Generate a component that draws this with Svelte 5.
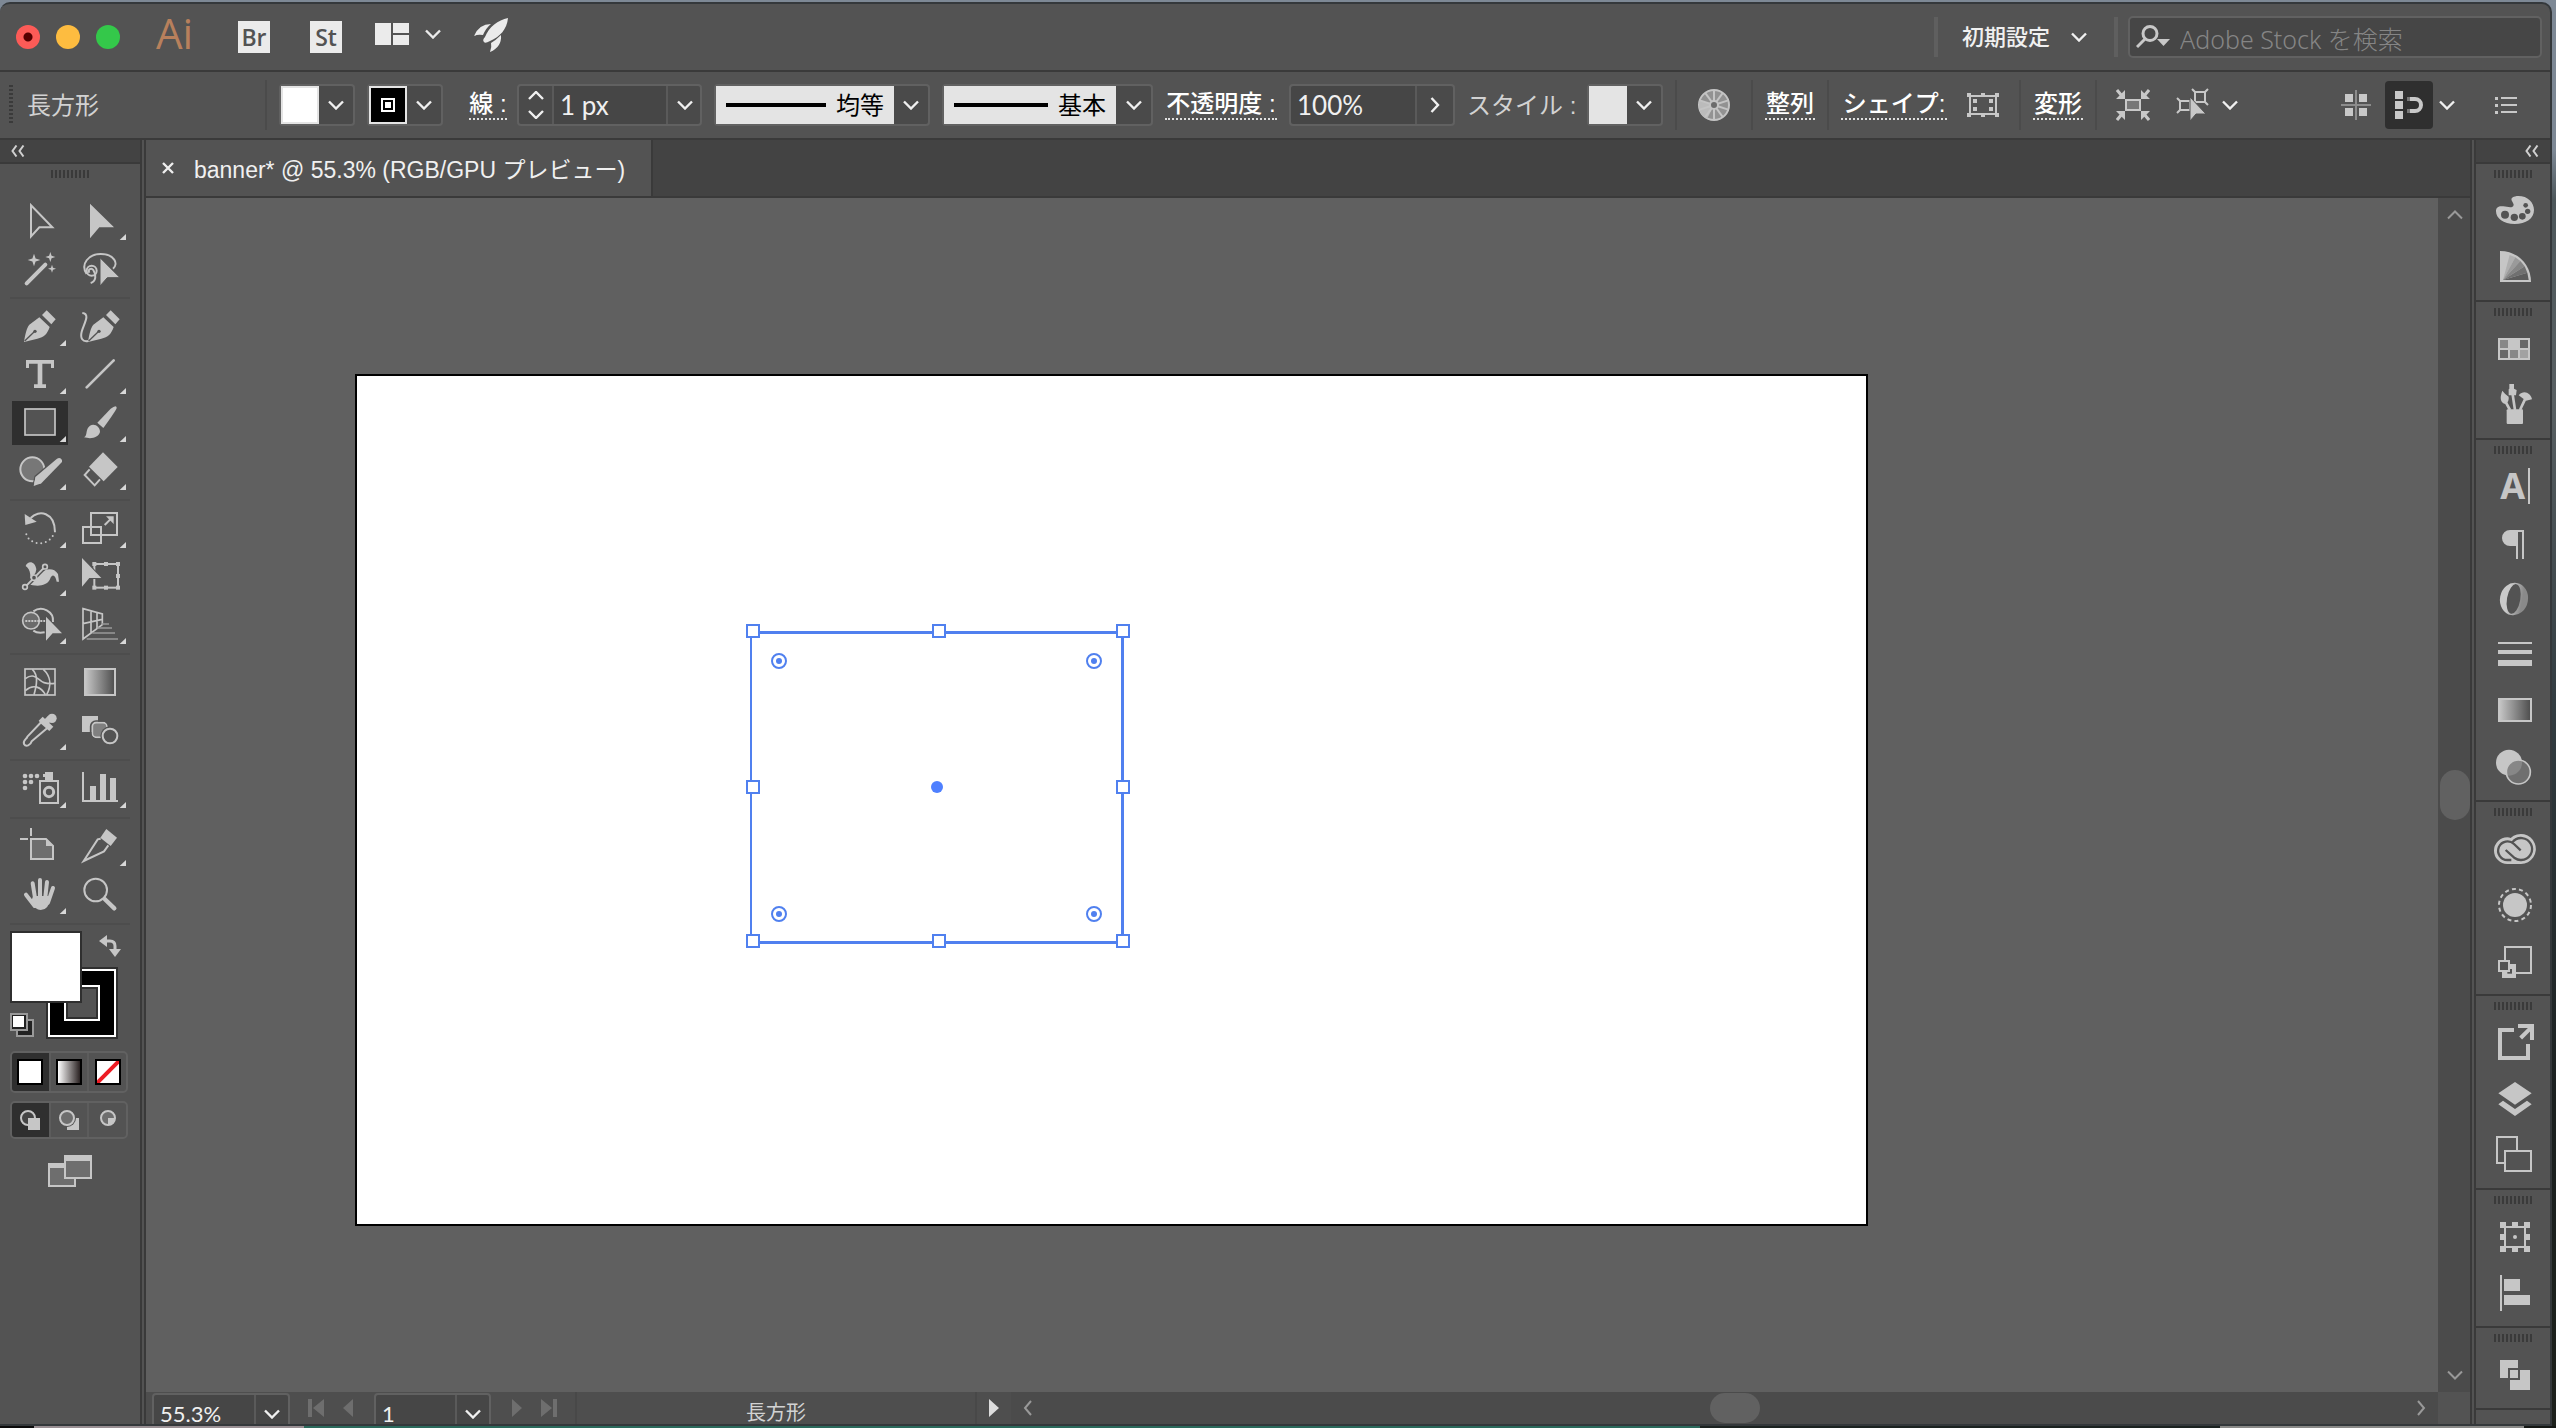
<script>
  const arrow = (x, y) => `<path d="M${x},${y}v104l28,-33h44z" fill="currentColor"/>`;
  const star = (x, y, r) => {
    const q = r / 4;
    return `<path d="M${x},${y - r}L${x + q},${y - q}L${x + r},${y}L${x + q},${y + q}L${x},${y + r}L${x - q},${y + q}L${x - r},${y}L${x - q},${y - q}z" fill="currentColor"/>`;
  };
  const squares = (points, s) =>
    points.map(([x, y]) => `<rect x="${x}" y="${y}" width="${s}" height="${s}" fill="currentColor"/>`).join('');
  const line = 'fill="none" stroke="currentColor" stroke-width="6"';
  const bg = '#535353';
  const nib = (dx) =>
    `<g transform="translate(${dx} 0)"><path d="M72,456C76,432 80,414 88,404L118,382L149,411C142,432 132,442 112,446z" fill="currentColor"/><path d="M126,375L140,361L167,388L154,403z" fill="currentColor"/><path d="M74,453L102,426" stroke="${bg}" stroke-width="4"/><circle cx="105" cy="424" r="5" fill="${bg}"/></g>`;

  // Tool icons are drawn on a grid three units to the pixel; y is the top of the cell on that grid.
  const toolGroups = [
    [
      { y: 21, tools: [
        { name: 'ダイレクト選択', art: `<path d="M93,46V139L118,112H157z" ${line}/>` },
        { name: '選択', more: true, art: arrow(270, 41) }
      ] },
      { y: 165, tools: [
        { name: '自動選択', art: `<path d="M80,280L136,224" ${line} style="stroke-width:12;stroke-linecap:round"/>${star(102, 210, 19)}${star(151, 201, 15)}${star(156, 236, 12)}` },
        { name: 'なげなわ', art: `<path d="M260,252C240,222 266,192 302,192C344,192 356,222 339,236" ${line}/><circle cx="275" cy="242" r="15" ${line}/><path d="M268,248C262,238 274,232 280,240C290,256 288,274 272,279" ${line}/><path d="M300,203V288L322,263H360z" fill="currentColor" stroke="${bg}" stroke-width="3"/>` }
      ] }
    ],
    [
      { y: 339, tools: [
        { name: 'ペン', more: true, art: nib(0) },
        { name: '曲線', art: `${nib(192)}<path d="M247,369C272,372 252,400 245,425C240,445 248,456 264,453" ${line}/>` }
      ] },
      { y: 483, tools: [
        { name: '文字', more: true, art: `<path d="M78,510H162V534H153V521H127V583H138V594H102V583H113V521H87V534H78z" fill="currentColor"/>` },
        { name: '直線', more: true, art: `<path d="M260,592L341,511" ${line} style="stroke-width:8;stroke-linecap:round"/>` }
      ] },
      { y: 627, tools: [
        { name: '長方形', more: true, active: true, art: `<rect x="75" y="657" width="90" height="78" fill="${bg}" stroke="currentColor" stroke-width="5"/>` },
        { name: 'ブラシ', more: true, art: `<path d="M292,698L332,656Q350,642 350,654Q348,662 310,714z" fill="currentColor"/><path d="M252,742C264,735 255,718 270,707C284,699 301,711 300,726C295,743 275,748 252,742z" fill="currentColor"/>` }
      ] },
      { y: 771, tools: [
        { name: 'Shaper', more: true, art: `<circle cx="97" cy="838" r="36" fill="#777" stroke="currentColor" stroke-width="6"/><path d="M101,888L107,860L170,807Q180,799 186,810L186,816L124,880z" fill="currentColor" stroke="${bg}" stroke-width="8" paint-order="stroke"/><path d="M98,880L94,892L130,892L124,884z" fill="${bg}"/><path d="M101,888L107,860L124,880z" fill="currentColor"/>` },
        { name: '消しゴム', more: true, art: `<path d="M309,787L353,831L311,874L267,830z" fill="currentColor"/><path d="M269,838L254,855L284,886L300,868" ${line}/>` }
      ] }
    ],
    [
      { y: 945, tools: [
        { name: '回転', more: true, art: `<path d="M92,984C116,958 165,966 165,1027" ${line}/><path d="M74,972L76,1005L110,995z" fill="currentColor"/><path d="M79,1033C90,1068 148,1070 162,1030" ${line} style="stroke-linecap:round;stroke-dasharray:0 14"/>` },
        { name: '拡大・縮小', more: true, art: `<rect x="273" y="969" width="78" height="66" ${line}/><rect x="249" y="1011" width="54" height="48" ${line}/><path d="M314,1005L334,985" ${line}/><path d="M318,979H341V1002z" fill="currentColor"/>` }
      ] },
      { y: 1089, tools: [
        { name: '線幅', more: true, art: `<path d="M77,1128C84,1110 106,1114 109,1138L104,1160L122,1150C132,1136 162,1130 174,1152L177,1175H170C166,1154 156,1150 150,1168C140,1190 108,1190 84,1182C96,1164 92,1138 77,1128z" fill="currentColor"/><path d="M80,1186L130,1135" stroke="${bg}" stroke-width="14"/><path d="M80,1186L130,1135" ${line}/><g fill="${bg}" stroke="currentColor" stroke-width="5"><circle cx="75" cy="1191" r="7"/><circle cx="102" cy="1163" r="8"/><circle cx="135" cy="1130" r="7"/></g>` },
        { name: '自由変形', art: `<rect x="283" y="1122" width="71" height="71" ${line}/>${squares([[277, 1116], [312, 1116], [348, 1116], [348, 1152], [277, 1187], [312, 1187], [348, 1187]], 12)}<path d="M246,1104V1190L268,1164H304z" fill="currentColor" stroke="${bg}" stroke-width="6" paint-order="stroke"/>` }
      ] },
      { y: 3, tools: [
        { name: 'シェイプ形成', more: true, art: `<circle cx="93" cy="62" r="25" fill="#6b6b6b" stroke="currentColor" stroke-width="5"/><path d="M100,34C126,16 162,34 159,66M100,92Q112,101 134,97" ${line}/><path d="M76,63H136" ${line} style="stroke-dasharray:6 3"/><path d="M138,50V122L158,100H186z" fill="currentColor" stroke="${bg}" stroke-width="4" paint-order="stroke"/>` },
        { name: '遠近グリッド', more: true, art: `<path d="M249,26L307,42V74L249,117zM249,71L307,58M273,33V99M291,38V86" ${line} style="stroke-width:5"/><path d="M306,72H327M292,84H336M277,99H345M260,117H354" fill="none" stroke="#999" stroke-width="5"/>` }
      ] }
    ],
    [
      { y: 177, tools: [
        { name: 'メッシュ', art: `<g ${line} style="stroke-width:5"><rect x="75" y="207" width="90" height="78"/><path d="M76,236C106,214 116,244 132,248Q146,252 164,250M76,272C100,250 124,262 136,284M97,208C116,226 110,256 102,284M130,208C156,232 152,262 140,284"/></g>` },
        { name: 'グラデーション', art: `<rect x="255" y="207" width="90" height="78" fill="url(#fade)" stroke="currentColor" stroke-width="6"/>` }
      ] },
      { y: 321, tools: [
        { name: 'スポイト', more: true, art: `<circle cx="156" cy="355" r="14" fill="currentColor"/><path d="M116,362L128,350L160,380L148,393L140,386L124,372z" fill="currentColor"/><path d="M138,366L150,354" ${line} style="stroke-width:18"/><path d="M124,366L82,410C80,418 68,420 72,432C78,442 92,436 95,424L142,384" ${line}/>` },
        { name: 'ブレンド', art: `<rect x="246" y="348" width="48" height="48" fill="currentColor"/><rect x="277" y="368" width="44" height="44" rx="12" fill="#808080" stroke="currentColor" stroke-width="5"/><rect x="272" y="363" width="54" height="54" rx="16" fill="none" stroke="${bg}" stroke-width="5"/><circle cx="330" cy="408" r="29" fill="${bg}"/><circle cx="330" cy="408" r="22" ${line}/>` }
      ] }
    ],
    [
      { y: 495, tools: [
        { name: 'シンボルスプレー', more: true, art: `<g fill="currentColor"><circle cx="75" cy="528" r="7"/><circle cx="93" cy="528" r="7"/><circle cx="111" cy="528" r="7"/><circle cx="75" cy="546" r="7"/><circle cx="93" cy="546" r="7"/><circle cx="75" cy="564" r="7"/><path d="M135,516H159V540H135V531H129V522H135z"/></g><rect x="120" y="543" width="54" height="66" ${line}/><circle cx="147" cy="576" r="14" ${line} style="stroke-width:9"/>` },
        { name: 'グラフ', more: true, art: `<path d="M249,516V603H354" ${line}/><path d="M270,558h18v42h-18zM300,522h18v78h-18zM330,534h18v66h-18z" fill="currentColor"/>` }
      ] }
    ],
    [
      { y: 669, tools: [
        { name: 'アートボード', art: `<path d="M93,717H138L159,738V777H93z" fill="#6e6e6e" stroke="currentColor" stroke-width="6"/><path d="M138,716V738H160z" fill="currentColor"/><path d="M93,684V708M60,717H84" ${line}/>` },
        { name: 'スライス', more: true, art: `<path d="M319,687L351,713L332,738L301,713z" fill="currentColor"/><path d="M302,716L293,718L251,783L312,754L325,736" ${line}/>` }
      ] },
      { y: 813, tools: [
        { name: '手のひら', more: true, art: `<path d="M120,905V840M106,900L98,850M135,900L141,846M144,908L159,864M104,918L78,884" ${line} style="stroke-width:12;stroke-linecap:round"/><path d="M100,888H144L150,896Q146,930 122,930Q106,930 92,906z" fill="currentColor"/>` },
        { name: 'ズーム', art: `<circle cx="287" cy="870" r="34" ${line}/><path d="M314,897L343,925" ${line} style="stroke-width:13;stroke-linecap:round"/>` }
      ] }
    ]
  ];

  const panelGroups = [
    [
      { name: 'カラー', y: 156, art: `<path d="M290,198C322,196 342,216 342,240C342,266 318,282 284,282C250,282 228,265 228,244C228,230 238,227 250,229C264,231 280,236 281,224C280,214 262,204 290,198z" fill="currentColor"/><g fill="${bg}"><circle cx="255" cy="254" r="12"/><circle cx="283" cy="262" r="11"/><circle cx="307" cy="259" r="10"/><circle cx="323" cy="244" r="8"/><circle cx="317" cy="226" r="7"/></g>` },
      { name: 'カラーガイド', y: 324, art: `<path d="M240,363C294,363 333,404 333,456H240z" fill="currentColor"/><path d="M249,450L269,375L286,382z" fill="#b0b0b0"/><path d="M249,450L286,382L301,393z" fill="#9a9a9a"/><path d="M249,450L301,393L314,409z" fill="#858585"/><path d="M249,450L314,409L322,428z" fill="#707070"/><path d="M249,450L322,428L326,450z" fill="#5c5c5c"/>` }
    ],
    [
      { name: 'スウォッチ', y: 570, art: `<rect x="234" y="624" width="96" height="66" fill="currentColor"/><path d="M240,630h24v24h-24zM270,660h24v24h-24z" fill="#888"/><path d="M300,630h24v24h-24zM240,660h24v24h-24z" fill="#686868"/><path d="M300,660h24v24h-24z" fill="#a2a2a2"/>` },
      { name: 'ブラシ', y: 738, art: `<g fill="currentColor"><rect x="260" y="838" width="49" height="44" rx="3"/><path d="M247,782Q256,794 266,800Q268,816 256,822Q234,816 247,782z"/><path d="M268,762H282V776L290,780L288,796H266V778L268,776z"/><path d="M296,796C312,778 332,790 336,808L318,812z"/></g><path d="M256,814L270,840M278,794L285,840M316,806L300,840" ${line} style="stroke-width:8"/>` }
    ],
    [
      { name: '文字', y: 984, art: `<text x="278" y="1107" text-anchor="middle" font-size="108" font-weight="700" fill="currentColor">A</text><rect x="324" y="1014" width="6" height="108" fill="currentColor"/>` },
      { name: '段落', y: 1152, art: `<path d="M312,1200V1287H306V1206H294V1287H288V1248H270A24,24 0 0 1 270,1200z" fill="currentColor"/>` },
      { name: 'OpenType', y: 1320, art: `<g transform="rotate(10 282 1407)"><path fill-rule="evenodd" fill="url(#sheen)" d="M240,1407a42,49 0 1 0 84,0a42,49 0 1 0 -84,0zM261,1407a20,45 0 1 1 40,0a20,45 0 1 1 -40,0z"/></g>` },
      { name: '線', y: 18, art: `<path d="M234,66h102v6h-102zM234,90h102v12h-102zM234,120h102v18h-102z" fill="currentColor"/>` },
      { name: 'グラデーション', y: 186, art: `<rect x="237" y="237" width="96" height="66" fill="url(#fade)" stroke="currentColor" stroke-width="6"/>` },
      { name: '透明', y: 354, art: `<circle cx="267" cy="428" r="39" fill="currentColor"/><circle cx="295" cy="456" r="36" fill="#777" fill-opacity=".8" stroke="currentColor" stroke-width="5"/>` }
    ],
    [
      { name: 'CC ライブラリ', y: 600, art: `<path d="M262,732A40,40 0 0 1 262,652Q268,652 272,654A45,45 0 1 1 303,732z" fill="currentColor"/><path d="M274,720H262A28,28 0 1 1 282,672L302,691M257,690L284,714Q294,721 304,720A33,33 0 1 0 277,667" fill="none" stroke="${bg}" stroke-width="7"/>` },
      { name: 'アピアランス', y: 768, art: `<circle cx="285" cy="855" r="36" fill="currentColor"/><circle cx="285" cy="855" r="48" ${line} style="stroke-dasharray:12 9.54"/>` },
      { name: 'グラフィックスタイル', y: 936, art: `<rect x="255" y="981" width="78" height="78" ${line}/><rect x="246" y="1032" width="42" height="42" fill="currentColor"/><rect x="262" y="1047" width="14" height="14" fill="${bg}"/><rect x="237" y="1023" width="30" height="30" fill="${bg}" stroke="currentColor" stroke-width="6"/>` }
    ],
    [
      { name: 'アセットの書き出し', y: 102, art: `<path d="M282,150H240V234H324V192M302,174L334,142M294,138H336V180" ${line} style="stroke-width:12"/>` },
      { name: 'レイヤー', y: 270, art: `<path d="M285,306L335,340L285,374L235,340zM235,373L249,362L285,387L321,362L335,373L285,408z" fill="currentColor"/>` },
      { name: 'アートボード', y: 438, art: `<rect x="231" y="471" width="60" height="78" ${line}/><rect x="255" y="513" width="78" height="60" fill="${bg}" stroke="currentColor" stroke-width="6"/>` }
    ],
    [
      { name: '変形', y: 684, art: `<rect x="255" y="741" width="60" height="60" ${line}/>${squares([[240, 726], [276, 726], [312, 726], [240, 762], [312, 762], [240, 798], [276, 798], [312, 798]], 18)}<circle cx="285" cy="771" r="6" fill="currentColor"/>` },
      { name: '整列', y: 852, art: `<path d="M240,885h6v108h-6zM252,897h48v36h-48zM252,945h78v30h-78z" fill="currentColor"/>` }
    ],
    [
      { name: 'パスファインダー', y: 1098, art: `<path d="M240,1140h54v54h-54zM270,1170h60v60h-60z" fill="currentColor"/><rect x="267" y="1167" width="30" height="30" fill="currentColor" stroke="${bg}" stroke-width="6"/>` }
    ]
  ];

  const handles = [
    [0, 0], [186, 0], [370, 0], [0, 156], [370, 156], [0, 310], [186, 310], [370, 310]
  ];
  const corners = [[33, 37], [348, 37], [33, 290], [348, 290]];
  const spokes = Array.from({ length: 10 }, (_, i) => i * 36);

  let strokeWidth = $state('1 px');
  let opacity = $state('100%');
  let zoom = $state('55.3%');
  let page = $state('1');
</script>

{#snippet chevron()}
  <svg class="chev" viewBox="0 0 16 10" width="16" height="10"><path d="M1 1.500 8 8.500 15 1.500" fill="none" stroke="currentColor" stroke-width="2.400" /></svg>
{/snippet}

{#snippet drop(label)}
  <button class="drop" aria-label={label}>{@render chevron()}</button>
{/snippet}

{#snippet back()}
  <svg viewBox="0 0 14 12" width="14" height="12"><path d="M5.500 0.500 1.500 6 5.500 11.500M12.500 0.500 8.500 6 12.500 11.500" fill="none" stroke="#d0d0d0" stroke-width="2" /></svg>
{/snippet}

<svg class="defs" width="0" height="0" aria-hidden="true">
  <linearGradient id="fade"><stop offset="0" stop-color="#c8c8c8" /><stop offset="1" stop-color="#4c4c4c" /></linearGradient>
  <linearGradient id="sheen"><stop offset=".3" stop-color="#cacaca" /><stop offset=".8" stop-color="#8a8a8a" /></linearGradient>
</svg>

<div class="desktop">
  <div class="window">
    <header class="titlebar">
      <div class="lights">
        <button class="light red" aria-label="閉じる"></button>
        <button class="light yellow" aria-label="しまう"></button>
        <button class="light green" aria-label="フルスクリーン"></button>
      </div>
      <span class="logo">Ai</span>
      <button class="badge first">Br</button>
      <button class="badge">St</button>
      <button class="arrange" aria-label="ドキュメントレイアウト">
        <svg viewBox="0 0 34 22" width="34" height="22"><path d="M0 0h16v22H0zM18 0h16v10H18zM18 12h16v10H18z" fill="currentColor" /></svg>
        {@render chevron()}
      </button>
      <button class="rocket" aria-label="GPU パフォーマンス">
        <svg viewBox="0 0 34 34" width="34" height="34"><path d="M34 0C24 2 15 9 11 19Q8 22 10 24Q11 26 16 23C26 19 33 11 34 0zM17 6Q5 6 0 18Q4 16 9 17Q12 10 17 6zM27 17Q22 22 17 25Q18 29 16 34Q28 29 27 17z" fill="currentColor" /></svg>
      </button>
      <div class="workspace">
        <label class="pick">
          <select aria-label="ワークスペース"><option>初期設定</option></select>
          {@render chevron()}
        </label>
      </div>
      <label class="search">
        <svg viewBox="0 0 34 24" width="34" height="24"><circle cx="14" cy="8.500" r="7" fill="none" stroke="#c8c8c8" stroke-width="3" /><path d="M9 14 1 22" stroke="#c8c8c8" stroke-width="3" /><path d="M21 14h13l-6.500 7z" fill="#c8c8c8" /></svg>
        <input type="search" placeholder="Adobe Stock を検索" aria-label="Adobe Stock を検索" />
      </label>
    </header>

    <div class="controls" role="toolbar" aria-label="コントロール">
      <div class="kind"><span class="vgrip"></span><span class="soft">長方形</span></div>
      <span class="sep"></span>
      <div class="combo"><button class="chip white" aria-label="塗り"></button>{@render drop('塗りの一覧')}</div>
      <div class="combo">
        <button class="chip black" aria-label="線の色"><svg viewBox="0 0 14 14" width="14" height="14"><rect x="1" y="1" width="12" height="12" fill="#000" stroke="#fff" stroke-width="2" /><path d="M4 4h6v6H4z" fill="#fff" /></svg></button>
        {@render drop('線の色の一覧')}
      </div>
      <button class="term pushed">線 :</button>
      <div class="combo weight">
        <button class="step" aria-label="増減">
          <svg viewBox="0 0 16 28" width="16" height="28"><path d="M1 8 8 1 15 8M1 20 8 27 15 20" fill="none" stroke="currentColor" stroke-width="2.400" /></svg>
        </button>
        <input class="field" bind:value={strokeWidth} aria-label="線幅" />
        {@render drop('線幅の一覧')}
      </div>
      <label class="combo profile">
        <span class="sample"><i></i><select aria-label="可変線幅プロファイル"><option>均等</option></select></span>
        <span class="drop">{@render chevron()}</span>
      </label>
      <label class="combo brush">
        <span class="sample"><i></i><select aria-label="ブラシ定義"><option>基本</option></select></span>
        <span class="drop">{@render chevron()}</span>
      </label>
      <button class="term opacity">不透明度 :</button>
      <div class="combo amount">
        <input class="field" bind:value={opacity} aria-label="不透明度" />
        <button class="drop" aria-label="不透明度を調整"><svg viewBox="0 0 10 16" width="10" height="16"><path d="M1.500 1 8 8 1.500 15" fill="none" stroke="currentColor" stroke-width="2.400" /></svg></button>
      </div>
      <span class="soft style">スタイル :</span>
      <div class="combo"><button class="chip pale" aria-label="スタイル"></button>{@render drop('スタイルの一覧')}</div>
      <span class="sep"></span>
      <button class="tool wide" aria-label="オブジェクトを再配色">
        <svg viewBox="0 0 34 34" width="34" height="34"><circle cx="17" cy="17" r="15" fill="#929292" stroke="#c4c4c4" stroke-width="2" /><path d="M17 17 10 31A15 15 0 0 1 3 12z" fill="#bbb" />{#each spokes as a}<path d="M17 17V2" stroke="#c4c4c4" stroke-width="2" transform="rotate({a} 17 17)" />{/each}<circle cx="17" cy="17" r="4" fill="#6c6c6c" stroke="#c4c4c4" stroke-width="2" /></svg>
      </button>
      <span class="sep"></span>
      <button class="term two">整列</button>
      <span class="sep"></span>
      <button class="term shape">シェイプ:</button>
      <button class="tool props" aria-label="シェイプのプロパティ">
        <svg viewBox="0 0 32 26" width="32" height="26"><rect x="3" y="4" width="26" height="18" fill="none" stroke="currentColor" stroke-width="2" /><path d="M0 1h4v4H0zM14 1h4v3h-4zM28 1h4v4h-4zM0 21h4v4H0zM14 22h4v3h-4zM28 21h4v4h-4zM6 7h4v4H6zM22 7h4v4h-4zM6 15h4v4H6zM22 15h4v4h-4z" fill="currentColor" /></svg>
      </button>
      <span class="sep"></span>
      <button class="term two">変形</button>
      <span class="sep"></span>
      <button class="tool props" aria-label="選択オブジェクトを編集">
        <svg viewBox="0 0 34 32" width="34" height="32"><rect x="10" y="11" width="14" height="10" fill="#777" stroke="currentColor" stroke-width="2" /><path d="M9 1v9H0zM25 1v9h9zM9 31v-9H0zM25 31v-9h9z" fill="currentColor" /><path d="M1 1 6 7M33 1 28 7M1 31 6 25M33 31 28 25" stroke="currentColor" stroke-width="3" /></svg>
      </button>
      <button class="tool pair" aria-label="類似オブジェクトを選択">
        <svg viewBox="0 0 34 34" width="34" height="34"><g fill="none" stroke="currentColor" stroke-width="2"><rect x="19" y="4" width="10" height="10" /><rect x="4" y="13" width="10" height="9" /><path d="M16 1 19 4M32 1 29 4M32 17 29 14M1 10 4 13M1 25 4 22" /></g><path d="M14 9v24l6-7h10z" fill="currentColor" stroke="#535353" /></svg>
        {@render chevron()}
      </button>
      <div class="right">
        <button class="tool" aria-label="グリッドに整合">
          <svg viewBox="0 0 30 30" width="30" height="30"><path d="M4 4h8v8H4zM18 4h8v8h-8zM4 18h8v8H4zM18 18h8v8h-8z" fill="currentColor" /><path d="M15 0v30M0 15h30" stroke="#8c8c8c" stroke-width="2" /></svg>
        </button>
        <button class="snap" aria-label="スナップ" aria-pressed="true">
          <svg viewBox="0 0 28 28" width="28" height="28"><path d="M0 0h8v8H0zM0 10h8v8H0zM0 20h8v8H0z" fill="currentColor" /><path d="M12 8h8a6 6 0 0 1 0 12h-8" fill="none" stroke="currentColor" stroke-width="4" /><path d="M12 6h3v4h-3zM12 18h3v4h-3z" fill="#777" /></svg>
        </button>
        <button class="tool after" aria-label="スナップのオプション">{@render chevron()}</button>
        <button class="tool" aria-label="メニュー">
          <svg viewBox="0 0 22 18" width="22" height="18"><path d="M0 1h3v3H0zM0 8h3v3H0zM0 15h3v3H0zM6 1h16v2H6zM6 8h16v2H6zM6 15h16v2H6z" fill="currentColor" /></svg>
        </button>
      </div>
    </div>

    <main>
      <aside class="tools">
        <div class="cap"><button aria-label="パネルを切り替え">{@render back()}</button></div>
        <div class="grip"></div>
        {#each toolGroups as group}
          <div class="toolgroup">
            {#each group as row}
              {#each row.tools as tool, i}
                <button class:active={tool.active} aria-label={tool.name}>
                  <svg viewBox="{30 + i * 180} {row.y} 180 144" width="60" height="48">
                    {@html tool.art}
                    {#if tool.more}<path d="M{198 + i * 180} {row.y + 111}v18h-19z" fill="#d8d8d8" />{/if}
                  </svg>
                </button>
              {/each}
            {/each}
          </div>
        {/each}
        <div class="well">
          <button class="stroke" aria-label="線"><span></span></button>
          <button class="fill" aria-label="塗り"></button>
          <button class="swap" aria-label="塗りと線を入れ替え"><svg viewBox="0 0 22 22" width="22" height="22"><path d="M6 6h5q5 0 5 5v4" fill="none" stroke="currentColor" stroke-width="3" /><path d="M0 6 8 0v12zM16 22l-6-8h12z" fill="currentColor" /></svg></button>
          <button class="reset" aria-label="初期設定の塗りと線"><svg viewBox="0 0 24 24" width="24" height="24"><rect x="7" y="7" width="16" height="16" fill="#222" stroke="#999" stroke-width="2" /><path d="M12 17h5v-5" fill="none" stroke="#fff" stroke-width="2" /><rect x="1" y="1" width="16" height="16" fill="#222" stroke="#999" stroke-width="2" /><rect x="3" y="3" width="11" height="11" fill="#fff" /></svg></button>
        </div>
        <div class="segment paint">
          <button class="on" aria-label="カラー"><i class="solid"></i></button>
          <button aria-label="グラデーション"><i class="ramp"></i></button>
          <button aria-label="なし"><i class="none"><svg viewBox="0 0 22 22" width="22" height="22"><path d="M0 22 22 0" stroke="#ed1c24" stroke-width="4" /></svg></i></button>
        </div>
        <div class="segment modes">
          <button class="on" aria-label="標準描画"><svg viewBox="0 0 22 22" width="22" height="22"><circle cx="9" cy="9" r="7" fill="#444" stroke="currentColor" stroke-width="2" /><path d="M9 9h12v12H9z" fill="currentColor" /></svg></button>
          <button aria-label="背面描画"><svg viewBox="0 0 22 22" width="22" height="22"><path d="M9 9h12v12H9z" fill="currentColor" /><circle cx="9" cy="9" r="9" fill="#535353" /><circle cx="9" cy="9" r="7" fill="#6e6e6e" stroke="currentColor" stroke-width="2" /></svg></button>
          <button aria-label="内側描画"><svg viewBox="0 0 22 22" width="22" height="22"><circle cx="11" cy="9" r="7" fill="#6e6e6e" stroke="currentColor" stroke-width="2" /><path d="M11 9h7q-1 6-7 7z" fill="currentColor" /></svg></button>
        </div>
        <button class="screen" aria-label="スクリーンモード"><svg viewBox="0 0 44 32" width="44" height="32"><g fill="#6e6e6e" stroke="currentColor" stroke-width="2"><rect x="1" y="9" width="26" height="22" /><rect x="17" y="1" width="26" height="22" /></g><path d="M1 9h15v4H1zM17 1h26v5H17z" fill="currentColor" /></svg></button>
      </aside>

      <section class="document">
        <nav class="tabs">
          <div class="tab">
            <button aria-label="タブを閉じる"><svg viewBox="0 0 14 14" width="14" height="14"><path d="M2 2 12 12M12 2 2 12" stroke="#eee" stroke-width="2.400" /></svg></button>
            <span>banner* @ 55.3% (RGB/GPU プレビュー)</span>
          </div>
        </nav>
        <div class="stage">
          <div class="canvas">
            <div class="artboard">
              <svg class="selection" viewBox="0 0 384 324" width="384" height="324">
                <path d="M5 7V319" stroke="#5080ef" stroke-width="2" />
                <path d="M4 8.500H378M376.500 8V318M4 318.500H378" stroke="#5080ef" stroke-width="3" />
                {#each handles as [x, y]}<rect x={x + 1} y={y + 1} width="12" height="12" fill="#fff" stroke="#5080ef" stroke-width="2" />{/each}
                {#each corners as [x, y]}<circle cx={x} cy={y} r="7" fill="none" stroke="#5080ef" stroke-width="2" /><circle cx={x} cy={y} r="3" fill="#5080ef" />{/each}
                <circle cx="191" cy="163" r="6" fill="#4f80ff" />
              </svg>
            </div>
          </div>
          <div class="vscroll">
            <button aria-label="上へ"><svg viewBox="0 0 16 10" width="16" height="10"><path d="M1 8.500 8 1.500 15 8.500" fill="none" stroke="#999" stroke-width="2" /></svg></button>
            <div class="thumb"></div>
            <button aria-label="下へ"><svg viewBox="0 0 16 10" width="16" height="10"><path d="M1 1.500 8 8.500 15 1.500" fill="none" stroke="#999" stroke-width="2" /></svg></button>
          </div>
        </div>
        <footer class="status">
          <div class="statcombo zoom"><input bind:value={zoom} aria-label="ズーム" /><button aria-label="ズームの一覧">{@render chevron()}</button></div>
          <div class="nav">
            <button aria-label="最初"><svg viewBox="0 0 16 18" width="16" height="18"><path d="M0 0h4v18H0zM16 0v18L5 9z" fill="currentColor" /></svg></button>
            <button aria-label="前へ"><svg viewBox="0 0 16 18" width="16" height="18"><path d="M13 0v18L3 9z" fill="currentColor" /></svg></button>
          </div>
          <div class="statcombo page"><input bind:value={page} aria-label="アートボード番号" /><button aria-label="アートボードの一覧">{@render chevron()}</button></div>
          <div class="nav">
            <button aria-label="次へ"><svg viewBox="0 0 16 18" width="16" height="18"><path d="M3 0v18L13 9z" fill="currentColor" /></svg></button>
            <button aria-label="最後"><svg viewBox="0 0 16 18" width="16" height="18"><path d="M12 0h4v18h-4zM0 0v18L11 9z" fill="currentColor" /></svg></button>
          </div>
          <div class="current">長方形</div>
          <button class="play" aria-label="表示項目"><svg viewBox="0 0 10 18" width="10" height="18"><path d="M0 0v18L10 9z" fill="#ddd" /></svg></button>
          <div class="hscroll">
            <button aria-label="左へ"><svg viewBox="0 0 10 16" width="10" height="16"><path d="M8 1 2 8 8 15" fill="none" stroke="#999" stroke-width="2" /></svg></button>
            <div class="thumb"></div>
            <button aria-label="右へ"><svg viewBox="0 0 10 16" width="10" height="16"><path d="M2 1 8 8 2 15" fill="none" stroke="#999" stroke-width="2" /></svg></button>
          </div>
          <div class="corner"></div>
        </footer>
      </section>

      <aside class="panels">
        <div class="cap end"><button aria-label="パネルを展開">{@render back()}</button></div>
        {#each panelGroups as group}
          <div class="panelgroup">
            <div class="grip"></div>
            {#each group as panel}
              <button aria-label={panel.name}><svg viewBox="168 {panel.y} 222 168" width="74" height="56">{@html panel.art}</svg></button>
            {/each}
          </div>
        {/each}
      </aside>
    </main>
  </div>
</div>

<style>
  :global(body) { margin: 0; background: #22282a; }
  .desktop {
    box-sizing: border-box;
    height: 100vh;
    min-height: 1320px;
    padding: 2px 4px 2px 0;
    display: flex;
    background:
      linear-gradient(90deg, #0c0c0c 34px, #9a9094 34px 304px, #2b6a5c 304px 1700px, #1c2321 1700px 2220px, #8a8a88 2220px 2524px, #151815 2524px) bottom / 100% 2px no-repeat,
      linear-gradient(#7d8895 0 150px, #4d575b 200px, #596063 400px, #333d42 700px, #1b2020 1100px, #1d211c);
    font-family: "Liberation Sans", "Noto Sans CJK JP", sans-serif;
    font-size: 24px;
    color: #f0f0f0;
  }
  button, input, select { font: inherit; color: inherit; background: none; border: 0; padding: 0; margin: 0; border-radius: 0; outline: 0; }
  button { display: flex; align-items: center; justify-content: center; flex: none; white-space: nowrap; }
  select { appearance: none; }
  input { min-width: 0; }
  svg { display: block; flex: none; }
  .defs { position: absolute; }
  .window {
    box-sizing: border-box;
    flex: 1;
    min-width: 0;
    display: flex;
    flex-direction: column;
    border: solid #34383b;
    border-width: 2px 2px 2px 0;
    border-radius: 10px 10px 0 0;
    background: #535353;
    overflow: hidden;
  }

  .titlebar { height: 66px; flex: none; display: flex; align-items: center; padding: 0 8px 0 16px; border-bottom: 2px solid #3a3a3a; }
  .lights { display: flex; gap: 16px; width: 140px; }
  .light { width: 24px; height: 24px; border-radius: 50%; }
  .red { background: radial-gradient(circle, #500 4px, #fc5b57 5px); }
  .yellow { background: #fdbc40; }
  .green { background: #34c84a; }
  .logo { width: 82px; font: 500 42px/56px "Open Sans", sans-serif; color: #b8805c; padding-bottom: 8px; }
  .badge { width: 32px; height: 32px; background: #ebebeb; color: #535353; font: 600 23px/32px "Open Sans", sans-serif; margin-right: 32px; }
  .badge.first { margin-right: 40px; }
  .arrange { gap: 16px; width: 68px; margin-right: 32px; padding-bottom: 6px; color: #ebebeb; }
  .rocket { padding-bottom: 4px; color: #ebebeb; }
  .workspace { box-sizing: border-box; margin-left: auto; height: 40px; width: 184px; border: solid #5f5f5f; border-width: 0 4px; display: flex; align-items: center; padding-left: 24px; }
  .pick { display: flex; align-items: center; gap: 20px; font-size: 22px; font-weight: 500; }
  .search { box-sizing: border-box; width: 414px; height: 42px; margin-left: 10px; border: 2px solid #616161; border-radius: 5px; background: #464646; display: flex; align-items: center; padding-left: 6px; gap: 10px; }
  .search input { flex: 1; appearance: none; font: 300 25px/38px "Noto Sans", "Noto Sans CJK JP", sans-serif; padding-top: 4px; }
  .search input::placeholder { color: #858585; opacity: 1; }

  .controls { height: 66px; flex: none; display: flex; align-items: center; gap: 12px; border-bottom: 2px solid #3a3a3a; padding: 0 33px 0 9px; white-space: nowrap; }
  .controls > * { flex: none; }
  .kind { width: 244px; display: flex; align-items: center; gap: 14px; }
  .vgrip { width: 4px; height: 40px; background: repeating-linear-gradient(#3a3a3a 0 2px, transparent 2px 4px); }
  .soft { color: #d2d2d2; padding-bottom: 4px; }
  .sep { width: 2px; height: 50px; background: #4b4b4b; }
  .combo { box-sizing: border-box; height: 42px; display: flex; border: 2px solid #616161; border-radius: 4px; background: #4a4a4a; width: 76px; }
  .chip { width: 38px; height: 38px; border: 2px solid #e4e4e4; box-sizing: border-box; }
  .white { background: #fff; }
  .black { background: #000; }
  .pale { background: #e4e4e4; }
  .drop { flex: 1 0 34px; display: flex; align-items: center; justify-content: center; }
  .term { border-bottom: 2px dotted #e0e0e0; font-weight: 500; color: #fff; line-height: 28px; }
  .pushed { margin-left: 14px; width: 38px; }
  .opacity { width: 112px; }
  .two { width: 50px; }
  .shape { width: 106px; }
  .weight { width: 185px; margin-left: -2px; }
  .step { width: 33px; }
  .field { flex: 1; width: 0; background: #464646; border: solid #5a5a5a; border-width: 0 2px; padding-left: 6px; font: 26px/38px Lato, sans-serif; }
  .weight .field { flex: 0 0 106px; }
  .profile { width: 216px; }
  .brush { width: 211px; }
  .sample { flex: none; display: flex; align-items: center; justify-content: space-between; background: #e4e4e4; color: #000; width: 158px; padding: 0 10px; }
  .brush .sample { width: 152px; }
  .sample i { height: 4px; width: 100px; background: #000; }
  .brush .sample i { width: 94px; }
  .profile .drop, .brush .drop { flex-basis: 0; }
  .amount { width: 166px; }
  .amount .field { border-left: 0; border-radius: 4px 0 0 4px; }
  .amount .drop { flex: 0 0 36px; }
  .style { width: 108px; }
  .tool { color: #c8c8c8; }
  .wide { width: 50px; }
  .props { width: 48px; }
  .pair { gap: 12px; width: 76px; }
  .pair .chev, .after { color: #f0f0f0; }
  .right { margin-left: auto; display: flex; align-items: center; }
  .snap { width: 48px; height: 48px; border-radius: 4px; background: #2f2f2f; color: #c8c8c8; margin-left: 14px; }
  .after { margin: 0 40px 0 6px; }

  main { flex: 1; min-height: 0; display: flex; }
  .cap { box-sizing: border-box; height: 24px; background: #434343; border-bottom: 2px solid #3a3a3a; display: flex; align-items: center; padding: 0 11px; }
  .end { justify-content: flex-end; }
  .grip { width: 38px; height: 8px; margin: 6px auto 4px; background: repeating-linear-gradient(90deg, #3a3a3a 0 2px, transparent 2px 4px); }

  .tools { width: 140px; flex: none; border-right: 2px solid #3a3a3a; overflow: hidden; }
  .tools > .grip { margin-bottom: 19px; }
  .toolgroup { display: grid; grid-template-columns: 60px 60px; margin: 0 10px 4px; padding-bottom: 4px; border-bottom: 2px solid #4d4d4d; color: #c6c6c6; }
  .toolgroup .active { background: linear-gradient(#2f2f2f, #2f2f2f) center / 56px 44px no-repeat; }
  .well { position: relative; height: 108px; margin: 6px 10px 0; color: #c6c6c6; }
  .well button { position: absolute; box-sizing: border-box; }
  .well .fill { left: 0; top: 0; width: 72px; height: 72px; background: #fff; border: 2px solid #2f2f2f; }
  .well .stroke { right: 14px; bottom: 2px; width: 68px; height: 68px; background: #000; border: 2px solid #fff; outline: 2px solid #2f2f2f; }
  .stroke span { box-sizing: border-box; width: 36px; height: 36px; border: 2px solid #fff; background: #535353; box-shadow: inset 0 0 0 2px #2f2f2f; }
  .well .swap { right: 9px; top: 4px; }
  .well .reset { left: 0; bottom: 2px; }
  .segment { box-sizing: border-box; width: 118px; margin: 12px 10px 0; border: 2px solid #616161; border-radius: 5px; display: flex; color: #c6c6c6; overflow: hidden; }
  .segment button { flex: 1; border-left: 2px solid #5c5c5c; }
  .segment button:first-child { border-left: 0; }
  .segment .on { background: #2f2f2f; }
  .paint { height: 42px; }
  .modes { height: 38px; margin-top: 8px; }
  .paint i { width: 22px; height: 22px; border: 2px solid #000; background: #fff; }
  .paint .ramp { background: linear-gradient(90deg, #fff, #2a2222); }
  .screen { margin: 16px 0 0 48px; color: #c6c6c6; }

  .document { flex: 1; min-width: 0; display: flex; flex-direction: column; border: solid #3a3a3a; border-width: 0 2px; margin: 0 2px; }
  .tabs { height: 56px; flex: none; display: flex; background: #434343; border-bottom: 2px solid #3a3a3a; }
  .tab { display: flex; align-items: center; gap: 19px; padding: 0 26px 0 15px; background: #535353; border-right: 2px solid #3a3a3a; font-size: 23px; white-space: nowrap; }
  .stage { flex: 1; min-height: 0; display: flex; }
  .canvas { flex: 1; position: relative; overflow: hidden; background: #606060; }
  .artboard { position: absolute; left: 209px; top: 176px; width: 1509px; height: 848px; background: #fff; border: 2px solid #000; }
  .selection { position: absolute; left: 389px; top: 248px; }
  .vscroll { width: 32px; flex: none; background: #4b4b4b; display: flex; flex-direction: column; align-items: center; justify-content: space-between; padding: 12px 0 12px 2px; box-sizing: border-box; }
  .thumb { width: 30px; height: 50px; border-radius: 15px; background: #616161; }
  .status { height: 32px; flex: none; display: flex; overflow: hidden; background: #4e4e4e; color: #f0f0f0; }
  .statcombo { box-sizing: border-box; height: 42px; margin-top: 1px; display: flex; border: 2px solid #616161; border-radius: 4px; background: #464646; }
  .statcombo input { flex: 1; width: 0; padding-left: 6px; font: 22px/38px Lato, sans-serif; }
  .statcombo button { width: 34px; border-left: 2px solid #5a5a5a; }
  .zoom { width: 138px; margin-left: 6px; }
  .page { width: 117px; }
  .nav { display: flex; width: 84px; justify-content: center; gap: 16px; color: #6e6e6e; }
  .current { width: 398px; border: solid #484848; border-width: 0 2px; text-align: center; font-size: 20px; line-height: 42px; color: #d2d2d2; }
  .play { width: 34px; }
  .hscroll { flex: 1; display: flex; align-items: center; justify-content: space-between; padding: 0 12px; background: #4b4b4b; }
  .hscroll .thumb { width: 50px; height: 30px; margin-left: 20px; }
  .corner { width: 32px; background: #535353; }

  .panels { width: 74px; flex: none; border-left: 2px solid #3a3a3a; overflow: hidden; color: #c6c6c6; font-family: "Noto Sans", sans-serif; }
  .panelgroup { padding-bottom: 6px; border-bottom: 2px solid #3a3a3a; }
</style>
